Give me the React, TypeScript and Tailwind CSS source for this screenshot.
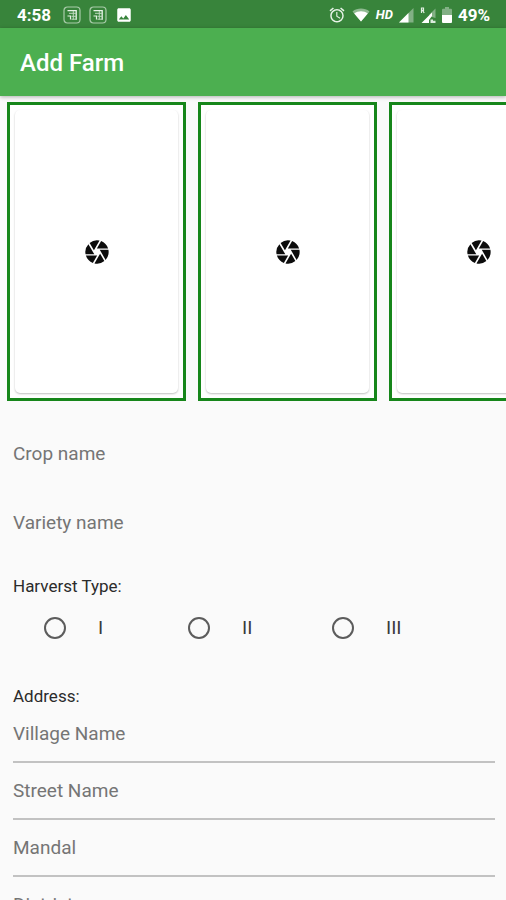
import { MdAlarm, MdCamera, MdImage } from "react-icons/md";

const photoSlots = [1, 2, 3];
const harvestTypes = ["I", "II", "III"];
const addressFields = ["Village Name", "Street Name", "Mandal", "District"];

function AppNotice() {
  return (
    <svg viewBox="0 0 18 18" className="size-[18px]" fill="none" aria-hidden="true">
      <rect x="1" y="1" width="16" height="16" rx="3.5" stroke="#a9cbaa" strokeWidth="1.2" />
      <path d="M4.5 4.7h8.7v9" stroke="#e9f4e9" strokeWidth="1.3" />
      <path d="M4.5 10h3v3.4" stroke="#e3f0e3" strokeWidth="1.2" />
      <path d="M6 7.3h7M10.3 5v8.6M8.5 10.3h5M8.5 13.2h5" stroke="#bcd8bd" strokeWidth="1" />
    </svg>
  );
}

function Wifi() {
  return (
    <svg viewBox="0 0 18 14" className="h-[14px] w-[18px]" aria-hidden="true">
      <path d="M9 13.5 0.5 3.4C5.4-.4 12.6-.4 17.5 3.4Z" fill="#8fba91" />
      <path d="M9 13.5 2.2 5.4C6.1 2.6 11.9 2.6 15.8 5.4Z" fill="#fff" />
    </svg>
  );
}

function Signal() {
  return (
    <svg viewBox="0 0 15 15" className="size-[15px]" aria-hidden="true">
      <path d="M0 14.5 14.5 0v14.5Z" fill="#82b085" />
      <path d="M0 14.5 9.5 5v9.5Z" fill="#fff" />
    </svg>
  );
}

function RoamingSignal() {
  return (
    <svg viewBox="0 0 16 17" className="h-[17px] w-4" aria-hidden="true">
      <path d="M9 8 15.5 1.5V11L12 10Z" fill="#82b085" />
      <path d="M1.5 16 12 5.5V9L9 13v3Z" fill="#fff" />
      <path d="M10.5 12.5h2.5v1.2h2.5V16h-5Z" fill="#dcecdd" />
      <path d="M1.5 6V1h2v2.4h-2M2.6 3.4 4.2 6" fill="none" stroke="#e3f0e3" strokeWidth="1.2" />
    </svg>
  );
}

function Battery() {
  return (
    <svg viewBox="0 0 10 16" className="h-4 w-[10px]" aria-hidden="true">
      <path d="M3 0h4v1.8h2q1 0 1 1V8H0V2.8q0-1 1-1h2Z" fill="#82b085" />
      <path d="M0 8h10v7q0 1-1 1H1q-1 0-1-1Z" fill="#fff" />
    </svg>
  );
}

function StatusBar() {
  return (
    <div className="flex h-7 shrink-0 items-center justify-between bg-[#38843b] pt-[2px] pr-4 pl-[17px] text-white">
      <div className="flex items-center">
        <span className="mr-3 text-[17px] leading-5 font-bold">4:58</span>
        <div className="flex items-center gap-2">
          <AppNotice />
          <AppNotice />
          <MdImage className="size-[18px]" />
        </div>
      </div>
      <div className="flex items-center gap-[6px]">
        <MdAlarm className="size-[18px] text-[#e8f3e8]" />
        <Wifi />
        <span className="text-[13px] leading-5 font-bold italic">HD</span>
        <Signal />
        <RoamingSignal />
        <Battery />
        <span className="text-[17px] leading-5 font-bold">49%</span>
      </div>
    </div>
  );
}

export default function App() {
  return (
    <div className="flex h-screen flex-col overflow-hidden bg-[#fafafa] font-[Roboto,sans-serif]">
      <StatusBar />
      <header className="z-10 flex h-[68px] shrink-0 items-center bg-[#4caf50] px-5 pt-[2px] shadow-[0_1px_4px_rgba(0,0,0,0.3)]">
        <h1 className="text-2xl font-medium text-white">Add Farm</h1>
      </header>

      <main className="min-h-0 flex-1 overflow-y-auto [scrollbar-width:none]">
        <div className="flex gap-3 overflow-x-auto px-[7px] pt-[6px] [scrollbar-width:none]">
          {photoSlots.map((slot) => (
            <button
              key={slot}
              type="button"
              aria-label={`Add photo ${slot}`}
              className="flex h-[299px] w-[179px] shrink-0 border-3 border-[#16861a] bg-white p-[5px]"
            >
              <span className="flex flex-1 items-center justify-center self-stretch rounded-[5px] bg-white shadow-[0_1px_2px_rgba(0,0,0,0.25)]">
                <MdCamera className="size-7 text-[#0c0c0c]" />
              </span>
            </button>
          ))}
        </div>

        <form className="pt-[18px] pr-[11px] pl-[13px]">
          {["Crop name", "Variety name"].map((name) => (
            <input
              key={name}
              type="text"
              aria-label={name}
              placeholder={name}
              className="block h-[69px] w-full bg-transparent text-[19px] outline-none placeholder:text-[#757575]"
            />
          ))}

          <fieldset className="pt-[19px]">
            <legend className="contents">
              <span className="block text-[17px] leading-5 text-[#2b2b2b]">Harverst Type:</span>
            </legend>
            <div className="grid h-16 grid-cols-3 items-center px-[25px]">
              {harvestTypes.map((type) => (
                <label key={type} className="flex items-center gap-8 pl-[6px] text-[19px] text-[#3a3a3a]">
                  <input
                    type="radio"
                    name="harvest"
                    value={type}
                    className="size-[22px] appearance-none rounded-full border-2 border-[#5c5c5c] checked:border-[6px] checked:border-[#4caf50]"
                  />
                  {type}
                </label>
              ))}
            </div>
          </fieldset>

          <h2 className="mt-[26px] text-[17px] leading-5 text-[#2b2b2b]">Address:</h2>
          {addressFields.map((name) => (
            <input
              key={name}
              type="text"
              aria-label={name}
              placeholder={name}
              className="block h-[57px] w-full border-b-2 border-[#c2c2c2] bg-transparent text-[19px] outline-none placeholder:text-[#757575]"
            />
          ))}
        </form>
      </main>
    </div>
  );
}
